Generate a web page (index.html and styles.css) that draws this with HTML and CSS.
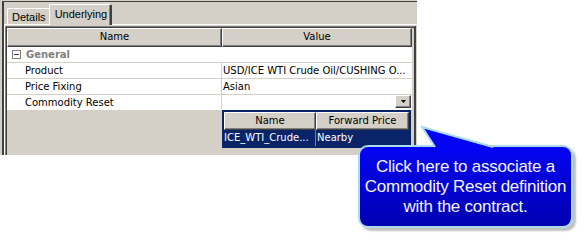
FILE: index.html
```html
<!DOCTYPE html>
<html>
<head>
<meta charset="utf-8">
<link rel="stylesheet" href="styles.css">
</head>
<body>
<div class="window">
  <div class="frame">
    <div class="tabs">
      <div class="tab">Details</div>
      <div class="tab active">Underlying</div>
    </div>
    <div class="panel">
      <div class="grid">
        <div class="grid-inner">
          <div class="head">
            <div class="hcell name-col">Name</div>
            <div class="hcell value-col">Value</div>
          </div>
          <div class="row category">
            <div class="cell name-col"><span class="toggle"></span>General</div>
            <div class="cell value-col"></div>
          </div>
          <div class="row">
            <div class="cell name-col prop">Product</div>
            <div class="cell value-col">USD/ICE WTI Crude Oil/CUSHING O...</div>
          </div>
          <div class="row">
            <div class="cell name-col prop">Price Fixing</div>
            <div class="cell value-col">Asian</div>
          </div>
          <div class="row">
            <div class="cell name-col prop">Commodity Reset</div>
            <div class="cell value-col combo"><span class="drop-btn"><svg width="5" height="3" viewBox="0 0 5 3"><polygon points="0,0 5,0 2.5,3" fill="#000"/></svg></span></div>
          </div>
        </div>
      </div>
    </div>
  </div>
</div>

<div class="popup">
  <div class="phead">
    <div class="hcell p-name">Name</div>
    <div class="hcell p-fwd">Forward Price</div>
  </div>
  <div class="prow">
    <div class="pcell p-name">ICE_WTI_Crude...</div>
    <div class="pcell p-fwd">Nearby</div>
  </div>
</div>

<svg class="tail" width="80" height="30" viewBox="0 0 80 30">
  <polygon points="4,4 17,23 18,28 74,28 74,23" fill="#0404f4"/>
  <polyline points="17,24 4,4 75,24" fill="none" stroke="#a9dded" stroke-width="2"/>
</svg>
<div class="callout">Click here to associate a<br>Commodity Reset definition<br>with the contract.</div>
</body>
</html>
```

FILE: styles.css
```css
html, body {
  margin: 0;
  padding: 0;
  background: #fff;
}
body {
  width: 587px;
  height: 243px;
  overflow: hidden;
  position: relative;
  font-family: "DejaVu Sans", Tahoma, sans-serif;
  font-size: 10px;
  color: #000;
}
.window {
  width: 417px;
  height: 155px;
  box-sizing: border-box;
  background: #d4d0c8;
  padding: 1px 0 0 2px;
}
.frame {
  height: 100%;
  box-sizing: border-box;
  border-top: 1px solid #404040;
  border-left: 2px solid #404040;
  display: flex;
  flex-direction: column;
}
.tabs {
  height: 22px;
  display: flex;
  align-items: flex-end;
  padding-left: 3px;
  position: relative;
  z-index: 2;
  font-family: "Liberation Sans", Arial, sans-serif;
  font-size: 11px;
}
.tab {
  height: 16px;
  box-sizing: border-box;
  padding: 2px 3px 0 4px;
  border-top: 1px solid #fff;
  border-left: 1px solid #fff;
  border-right: 1px solid #808080;
  border-radius: 2px 2px 0 0;
  line-height: 13px;
  white-space: nowrap;
}
.tab.active {
  height: 21px;
  margin-bottom: -1px;
  padding: 3px 3px 0 5px;
  margin-left: -1px;
  background: #d4d0c8;
  border-right: 2px solid #404040;
  box-shadow: inset -1px 0 0 #808080;
}
.panel {
  flex: 1;
  border-top: 1px solid #fff;
  border-left: 1px solid #fff;
  padding-top: 1px;
  display: flex;
  flex-direction: column;
  min-height: 0;
}
.grid {
  flex: 1;
  width: 411px;
  box-sizing: border-box;
  border-top: 1px solid #808080;
  border-left: 1px solid #808080;
  border-right: 2px solid #404040;
  display: flex;
  flex-direction: column;
}
.grid-inner {
  flex: 1;
  border-top: 1px solid #404040;
  border-left: 1px solid #404040;
  background: #d4d0c8;
}
.head {
  display: flex;
  height: 19px;
}
.hcell {
  box-sizing: border-box;
  height: 100%;
  background: #d4d0c8;
  border-top: 1px solid #fff;
  border-left: 1px solid #fff;
  border-right: 1px solid #404040;
  border-bottom: 1px solid #404040;
  box-shadow: inset -1px -1px 0 #808080;
  text-align: center;
  line-height: 16px;
}
.name-col { width: 215px; }
.value-col { width: 190px; }
.row {
  display: flex;
  height: 16px;
  width: 405px;
  background: #fff;
  box-sizing: border-box;
  border-bottom: 1px solid #d4d0c8;
}
.cell {
  box-sizing: border-box;
  height: 15px;
  line-height: 15px;
  white-space: nowrap;
  overflow: hidden;
}
.cell.name-col {
  width: 215px;
  border-right: 1px solid #d4d0c8;
}
.cell.value-col {
  width: 190px;
  padding-left: 1px;
}
.prop { padding-left: 18px; }
.category .name-col {
  display: flex;
  align-items: center;
  padding-left: 5px;
  font-weight: bold;
  color: #808080;
  border-right: none;
}
.toggle {
  width: 7px;
  height: 7px;
  border: 1px solid #808080;
  margin-right: 5px;
  position: relative;
  background: #fff;
}
.toggle::after {
  content: "";
  position: absolute;
  left: 1px;
  right: 1px;
  top: 3px;
  height: 1px;
  background: #404040;
}
.combo {
  display: flex;
  justify-content: flex-end;
  align-items: flex-start;
  padding-right: 1px;
}
.drop-btn {
  width: 16px;
  height: 13px;
  box-sizing: border-box;
  background: #d4d0c8;
  border-top: 1px solid #fff;
  border-left: 1px solid #fff;
  border-right: 1px solid #404040;
  border-bottom: 1px solid #404040;
  box-shadow: inset -1px -1px 0 #808080;
  display: flex;
  align-items: center;
  justify-content: center;
}
.popup {
  position: absolute;
  left: 222px;
  top: 110px;
  width: 189px;
  box-sizing: border-box;
  border: 2px solid #0a246a;
  background: #0a246a;
  z-index: 3;
}
.phead {
  display: flex;
  height: 18px;
}
.p-name { width: 92px; }
.p-fwd { width: 93px; }
.prow {
  display: flex;
  height: 16px;
  background: #0a246a;
  color: #fff;
}
.pcell {
  box-sizing: border-box;
  line-height: 16px;
  white-space: nowrap;
  overflow: hidden;
}
.prow .p-name {
  border-right: 1px solid #808080;
}
.prow .p-fwd { padding-left: 1px; }
.callout {
  position: absolute;
  left: 358px;
  top: 145px;
  width: 215px;
  height: 83px;
  box-sizing: border-box;
  border: 2px solid #a9dded;
  border-radius: 10px;
  background: linear-gradient(#0404f4, #0000b0);
  box-shadow: 3px 3px 2px rgba(0, 0, 0, 0.25);
  color: #f4f4ff;
  font-family: "Liberation Sans", Arial, sans-serif;
  font-size: 17px;
  line-height: 20px;
  text-align: center;
  padding-top: 10px;
  letter-spacing: -0.25px;
  z-index: 4;
}
.tail {
  position: absolute;
  left: 418px;
  top: 123px;
  z-index: 5;
}
```
